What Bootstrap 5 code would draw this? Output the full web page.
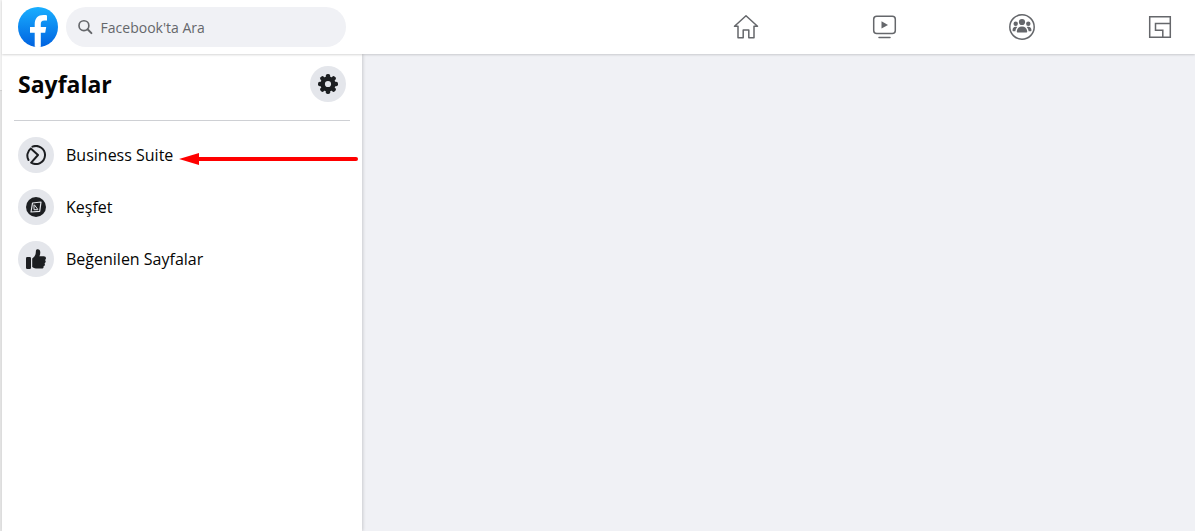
<!DOCTYPE html>
<html lang="tr">
<head>
<meta charset="utf-8">
<meta name="viewport" content="width=device-width, initial-scale=1">
<title>Sayfalar | Facebook</title>
<link href="https://cdn.jsdelivr.net/npm/bootstrap@5.3.0/dist/css/bootstrap.min.css" rel="stylesheet">
<style>
body { background: #f0f1f5; font-family: "Open Sans", "Noto Sans", sans-serif; color: #050505; }
svg { display: block; }
.edge { width: 2px; background: #e4e4e4; }
.edge-top { height: 91px; background: #f3f3f3; border-bottom: 1px solid #d4d4d4; }
.topbar { height: 54px; background: #fff; box-shadow: 0 1px 2px rgba(0,0,0,.16); z-index: 2; padding-right: 22px; }
.search { width: 280px; height: 40px; background: #f0f1f5; padding: 0 12px; }
.search input { font-size: 14px; color: #65676b; }
.search input::placeholder { color: #65676b; opacity: 1; }
.tabs { gap: 112px; color: #65676b; }
.sidebar { width: 360px; background: #fff; box-shadow: 1px 0 3px rgba(0,0,0,.16); }
.sidebar h1 { font-size: 23px; line-height: 36px; }
.round { width: 36px; height: 36px; background: #e4e6eb; color: #1c1e21; }
.divider { margin: 18px 12px 8px; border-top: 1px solid #ced0d4; }
.page-link-row { height: 52px; padding: 8px 16px; gap: 12px; color: #050505; font-size: 16px; font-weight: 500; }
.pointer { right: 4px; top: 23px; }
</style>
</head>
<body>
<div class="d-flex min-vh-100">
  <div class="edge flex-shrink-0"><div class="edge-top"></div></div>
  <div class="d-flex flex-column flex-grow-1">
    <header class="topbar d-flex align-items-center justify-content-between position-relative ps-3">
      <div class="d-flex align-items-center gap-2">
        <a href="#" aria-label="Facebook">
          <svg width="40" height="40" viewBox="0 0 40 40">
            <defs><linearGradient id="blue" x1="0" y1="0" x2="0" y2="1"><stop offset="0" stop-color="#19afff"/><stop offset="1" stop-color="#0062e0"/></linearGradient></defs>
            <circle cx="20" cy="20" r="20" fill="url(#blue)"/>
            <path fill="#fff" d="M16.7 39.7V25.8H12V20h4.700v-2.400C16.700 11 20 8 25.500 8c1.500 0 3 .2 3.500.4v5h-2.500c-2.900 0-3.700 1.300-3.700 3.600v3h5.400l-1 5.800h-4.400v13.900a20 20 0 0 1-6.100 0z"/>
          </svg>
        </a>
        <label class="search d-flex align-items-center gap-2 rounded-pill">
          <svg width="16" height="16" viewBox="0 0 16 16" fill="none" stroke="#65676b" stroke-width="1.800" stroke-linecap="round"><circle cx="6.500" cy="6.500" r="5.400"/><path d="M10.500 10.500 14.700 14.700" stroke-width="2.200"/></svg>
          <input class="border-0 bg-transparent p-0 w-100" type="search" placeholder="Facebook'ta Ara" aria-label="Facebook'ta Ara">
        </label>
      </div>
      <nav class="tabs d-flex align-items-center">
        <a href="#" class="text-reset" aria-label="Ana Sayfa">
          <svg width="26" height="26" viewBox="0 0 26 26" fill="none" stroke="currentColor" stroke-width="1.500" stroke-linejoin="round"><path d="M13 1.700 1.500 12.300H5V23.700h5.200V16h5.600v7.700H21V12.300h3.500z"/></svg>
        </a>
        <a href="#" class="text-reset" aria-label="Watch">
          <svg width="26" height="26" viewBox="0 0 26 26" fill="none" stroke="currentColor" stroke-width="1.500" stroke-linecap="round"><rect x="2.700" y="2.300" width="21.600" height="17.200" rx="3"/><path d="M8 23.500h11"/><path d="M10.500 7.200v7.400l6.500-3.700z" fill="currentColor" stroke="none"/></svg>
        </a>
        <a href="#" class="text-reset" aria-label="Gruplar">
          <svg width="26" height="26" viewBox="0 0 26 26" fill="currentColor"><circle cx="13" cy="13" r="12.200" fill="none" stroke="currentColor" stroke-width="1.500"/><circle cx="13" cy="8" r="3.100"/><circle cx="6.700" cy="9.700" r="2.200"/><circle cx="19.300" cy="9.700" r="2.200"/><path d="M8.500 18.500c-.6 0-.8-.5-.7-1.200.3-3 2.200-4.700 5.200-4.700s4.900 1.700 5.200 4.700c.1.700-.1 1.200-.7 1.200zM3.600 16.800c-.3-2.400.8-4 3-4 .7 0 1.200.1 1.600.4-1 1-1.600 2.200-1.800 4H4c-.2 0-.4-.1-.4-.4zM22.400 16.800c.3-2.400-.8-4-3-4-.7 0-1.200.1-1.600.4 1 1 1.600 2.200 1.800 4H22c.2 0 .4-.1.4-.4z"/></svg>
        </a>
        <a href="#" class="text-reset" aria-label="Oyunlar">
          <svg width="26" height="26" viewBox="0 0 26 26" fill="none" stroke="currentColor" stroke-width="1.500"><path d="M2.700 2.700h20.600v20.600H2.700zM23.300 9.500H8.500v6.800h7.300v7M23.300 9.500"/></svg>
        </a>
      </nav>
    </header>
    <div class="d-flex flex-grow-1">
      <aside class="sidebar flex-shrink-0">
        <div class="d-flex align-items-center justify-content-between px-3 pt-2 mt-1 pb-0">
          <h1 class="fw-bold m-0">Sayfalar</h1>
          <button type="button" class="round rounded-circle border-0 p-0 d-flex align-items-center justify-content-center" aria-label="Ayarlar">
            <svg width="20" height="20" viewBox="-10 -10 20 20"><g fill="currentColor"><circle r="7.600"/><g id="teeth"><rect x="-2.200" y="-10" width="4.400" height="20" rx="1.800"/><rect x="-10" y="-2.200" width="20" height="4.400" rx="1.800"/></g><use href="#teeth" transform="rotate(45)"/></g><circle r="3.100" fill="#e4e6eb"/></svg>
          </button>
        </div>
        <div class="divider"></div>
        <ul class="list-unstyled m-0">
          <li class="position-relative">
            <a href="#" class="page-link-row d-flex align-items-center text-decoration-none">
              <span class="round rounded-circle d-flex align-items-center justify-content-center">
                <svg width="20" height="20" viewBox="0 0 20 20" fill="none" stroke="currentColor" stroke-width="2" stroke-linecap="round" stroke-linejoin="round"><path d="M6.500 1.700A9 9 0 1 1 5.200 17.600L12 10 4.800 3.500A9 9 0 0 0 2.500 15"/></svg>
              </span>
              <span>Business Suite</span>
            </a>
            <svg class="pointer position-absolute" width="179" height="14" viewBox="0 0 179 14" aria-hidden="true"><path d="M18 7h159" stroke="red" stroke-width="4" stroke-linecap="round"/><path d="M0 7 20 1v12z" fill="red"/></svg>
          </li>
          <li>
            <a href="#" class="page-link-row d-flex align-items-center text-decoration-none">
              <span class="round rounded-circle d-flex align-items-center justify-content-center">
                <svg width="20" height="20" viewBox="0 0 20 20"><circle cx="10" cy="10" r="10" fill="currentColor"/><path d="M6.500 6 15 5l-1.300 9.300L5 15z" fill="none" stroke="#e4e6eb" stroke-width="1.200" stroke-linejoin="round"/><path d="M8 7.500v5.200h4.200M8.500 8l3 4" fill="none" stroke="#e4e6eb"/></svg>
              </span>
              <span>Keşfet</span>
            </a>
          </li>
          <li>
            <a href="#" class="page-link-row d-flex align-items-center text-decoration-none">
              <span class="round rounded-circle d-flex align-items-center justify-content-center">
                <svg width="20" height="20" viewBox="0 0 20 20" fill="currentColor"><rect y="8" width="5" height="12" rx="1.300"/><path d="M6.200 9.500c2-1.300 3.200-3 3.500-5.200L9.900 2C10 .9 10.600.3 11.600.3c1.700 0 2.700 1.200 2.700 3.200 0 1.500-.4 2.700-.9 3.700h4.400c1.300 0 2.200.8 2.200 2 0 .8-.4 1.400-1 1.700.5.4.7.9.7 1.500 0 .9-.5 1.500-1.200 1.800.3.3.4.7.4 1.200 0 .9-.6 1.600-1.400 1.800.1.300.1.500.1.700 0 1-.8 1.700-2 1.700h-4.200c-2 0-3.500-.5-5.200-1.500z"/></svg>
              </span>
              <span>Beğenilen Sayfalar</span>
            </a>
          </li>
        </ul>
      </aside>
      <main class="flex-grow-1"></main>
    </div>
  </div>
</div>
<script src="https://cdn.jsdelivr.net/npm/bootstrap@5.3.0/dist/js/bootstrap.bundle.min.js"></script>
</body>
</html>
